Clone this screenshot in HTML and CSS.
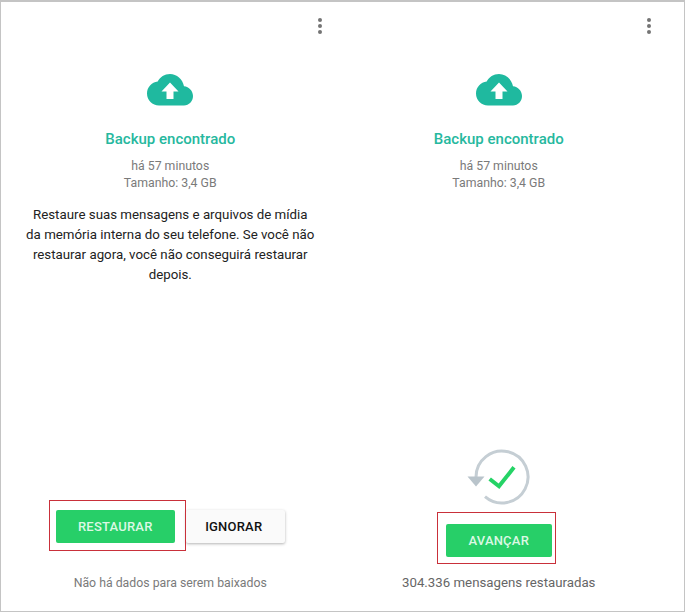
FILE: index.html
```html
<!DOCTYPE html>
<html lang="pt">
<head>
    <meta charset="UTF-8">
    <title>Backup encontrado</title>
    <link rel="stylesheet" href="styles.css">
</head>
<body>
    <div class="frame">
        <!-- Before restoring -->
        <section class="pane">
            <div class="menu"><span></span><span></span><span></span></div>
            <svg class="cloud" viewBox="0 0 46 32">
                <path d="M37 12.2C35.6 5.200 29.800 0 23 0c-5.400 0-10 3-12.300 7.500C4.600 8.200 0 13.300 0 19.500 0 26.400 5.400 31.500 12 31.500h25c5 0 9-4.300 9-9.500 0-5-4-9.400-9-9.800z"/>
                <path class="arrow" d="M23 8.500l-8.500 9h5v7.500h7v-7.500h5z"/>
            </svg>
            <h2 class="title">Backup encontrado</h2>
            <p class="meta">há 57 minutos<br>Tamanho: 3,4 GB</p>
            <p class="message">Restaure suas mensagens e arquivos de mídia da memória interna do seu telefone. Se você não restaurar agora, você não conseguirá restaurar depois.</p>
            <div class="actions">
                <div class="highlight left-mark"><button class="btn green wide">RESTAURAR</button></div>
                <button class="btn plain">IGNORAR</button>
            </div>
            <p class="status">Não há dados para serem baixados</p>
        </section>

        <!-- After restoring -->
        <section class="pane">
            <div class="menu"><span></span><span></span><span></span></div>
            <svg class="cloud" viewBox="0 0 46 32">
                <path d="M37 12.2C35.6 5.200 29.800 0 23 0c-5.400 0-10 3-12.300 7.500C4.600 8.200 0 13.300 0 19.500 0 26.400 5.400 31.500 12 31.500h25c5 0 9-4.300 9-9.500 0-5-4-9.400-9-9.800z"/>
                <path class="arrow" d="M23 8.500l-8.500 9h5v7.500h7v-7.500h5z"/>
            </svg>
            <h2 class="title">Backup encontrado</h2>
            <p class="meta">há 57 minutos<br>Tamanho: 3,4 GB</p>
            <svg class="restored" viewBox="0 0 64 56">
                <path class="ring" d="M9 28A26 26 0 1 1 18 47.700"/>
                <path class="ring-head" d="M0.500 27.500h17l-8.500 10z"/>
                <path class="tick" d="M22.700 30l9.300 7.300L47 18.300"/>
            </svg>
            <div class="highlight right-mark"><button class="btn green">AVANÇAR</button></div>
            <p class="status dark">304.336 mensagens restauradas</p>
        </section>
    </div>
</body>
</html>
```

FILE: styles.css
```css
* {
    box-sizing: border-box;
}

html, body {
    margin: 0;
    height: 100%;
}

body {
    background: #fff;
    font-family: Roboto, "Liberation Sans", sans-serif;
}

.frame {
    height: 612px;
    border: 1px solid #c4c4c4;
    border-top-width: 2px;
    padding: 0 20px 0 5px;
    display: grid;
    grid-template-columns: 328.500px 328.500px;
}

.pane {
    display: flex;
    flex-direction: column;
    align-items: center;
    padding-top: 16px;
    position: relative;
}

.menu {
    align-self: flex-end;
    margin-right: 12.500px;
    display: flex;
    flex-direction: column;
    gap: 2px;
}

.menu span {
    width: 4px;
    height: 4px;
    border-radius: 50%;
    background: #747474;
}

.cloud {
    width: 46px;
    height: 32px;
    margin-top: 40px;
    fill: #1fb99f;
}

.cloud .arrow {
    fill: #fff;
}

.title {
    margin: 23px 0 0;
    font-size: 15px;
    line-height: 20px;
    font-weight: 500;
    color: #26b89e;
}

.meta {
    margin: 9px 0 0;
    font-size: 12.300px;
    line-height: 17px;
    color: #7a7a7a;
    text-align: center;
}

.message {
    margin: 13px 0 0;
    width: 292px;
    font-size: 13.300px;
    line-height: 20px;
    color: #222;
    text-align: center;
}

.actions {
    margin-top: auto;
    display: flex;
}

.btn {
    height: 33px;
    border: 0;
    border-radius: 2px;
    font-family: inherit;
    font-size: 13px;
    font-weight: 500;
    letter-spacing: 0.2px;
    padding: 0;
    display: block;
}

.green {
    width: 106px;
    background: #27cf68;
    color: #dcf8e4;
}

.wide {
    width: 119px;
}

.plain {
    width: 99px;
    margin-left: 11px;
    padding-right: 3px;
    background: #fafafa;
    color: #111;
    box-shadow: 0 1px 3px rgba(0, 0, 0, 0.3);
}

/* red annotation boxes around the buttons */
.highlight {
    position: relative;
}

.highlight::after {
    content: "";
    position: absolute;
    border: 1.500px solid #c9303a;
}

.left-mark::after {
    inset: -10px -11px -8px -7px;
}

.right-mark {
    margin-top: 19px;
}

.right-mark::after {
    inset: -12px -4px -7px -9px;
}

.restored {
    width: 64px;
    height: 56px;
    margin-top: auto;
    margin-bottom: 0;
    fill: none;
}

.ring {
    stroke: #c5ced4;
    stroke-width: 3;
    fill: none;
}

.ring-head {
    fill: #b9c4cb;
}

.tick {
    stroke: #25d366;
    stroke-width: 4;
    fill: none;
}

.status {
    margin: 32px 0 20px;
    font-size: 12.300px;
    line-height: 16px;
    color: #7a7a7a;
}

.status.dark {
    margin-top: 18px;
    font-size: 13.250px;
    color: #666;
}
```
